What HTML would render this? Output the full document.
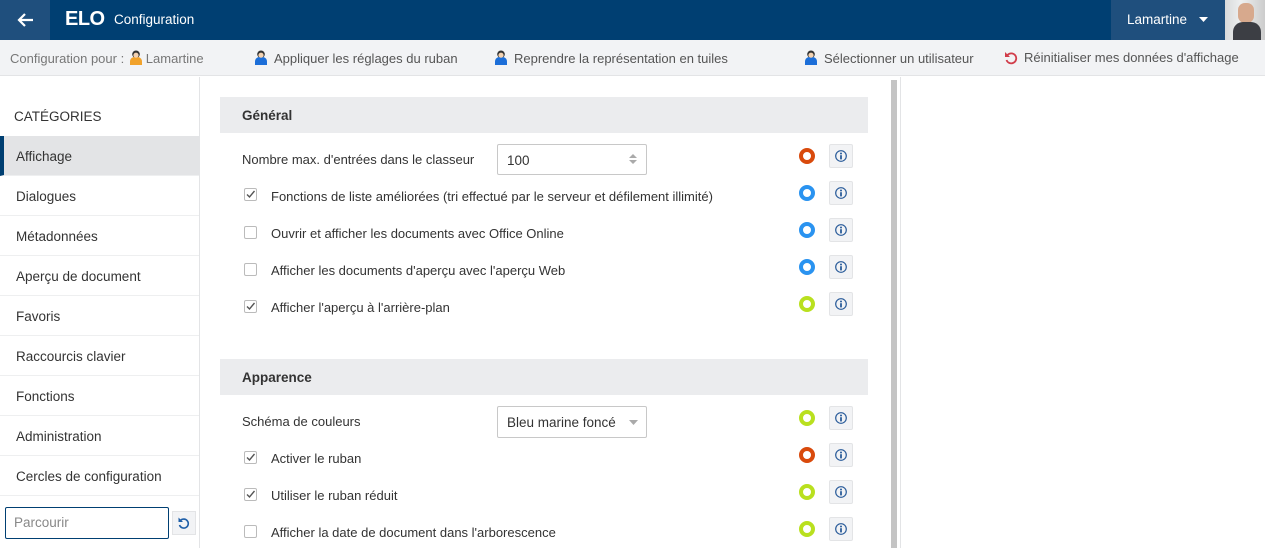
<!DOCTYPE html>
<html><head><meta charset="utf-8"><style>
*{margin:0;padding:0;box-sizing:border-box}
body{width:1265px;height:548px;overflow:hidden;background:#fff;font-family:"Liberation Sans",sans-serif;color:#333;position:relative;font-size:13px}
.a{position:absolute;white-space:nowrap}
.hdr{left:0;top:0;width:1265px;height:40px;background:#003f72}
.tb{left:0;top:40px;width:1265px;height:36px;background:#f2f3f5;border-bottom:1px solid #e3e4e6}
.tbt{top:50px;font-size:13px;color:#555}
.side{left:0;top:77px;width:200px;height:471px;border-right:1px solid #e3e4e6}
.it{left:0;width:199px;height:40px;line-height:42px;padding-left:16px;font-size:13.5px;color:#333;border-bottom:1px solid #eeeff0}
.sec{left:220px;width:648px;height:36px;background:#ebecee;font-weight:bold;font-size:13.5px;line-height:38px;padding-left:22px;color:#333}
.lbl{left:271px;font-size:13px;color:#333}
.cb{left:244px;width:13px;height:13px;border:1px solid #bbb;background:#fff;border-radius:2px}
.ck{left:244px;width:13px;height:13px}
.ci{left:799px;width:16px;height:16px;border-radius:50%;border:4px solid}
.ib{left:829px;width:24px;height:24px;background:#f2f3f5;border:1px solid #e3e4e6;border-radius:2px}
.usr{display:inline-block;width:12px;height:15px;vertical-align:-2px;margin-right:7px}
</style></head><body>
<div class="a hdr"></div>
<div class="a" style="left:0;top:0;width:50px;height:40px;background:#1f4f7d"></div>
<svg class="a" style="left:16px;top:12px" width="18" height="16" viewBox="0 0 18 16"><path d="M17 8H3M9 2L3 8l6 6" stroke="#fff" stroke-width="2.2" fill="none"/></svg>
<div class="a" style="left:65px;top:8px;color:#fff;font-weight:bold;font-size:20px;letter-spacing:-0.5px">ELO</div>
<div class="a" style="left:114px;top:12px;color:#fff;font-size:13.5px">Configuration</div>
<div class="a" style="left:1111px;top:0;width:114px;height:40px;background:#1f4f7d"></div>
<div class="a" style="left:1127px;top:12px;color:#fff;font-size:13.5px">Lamartine</div>
<svg class="a" style="left:1199px;top:17px" width="9" height="6"><path d="M0 0h9L4.5 5z" fill="#fff"/></svg>
<div class="a" style="left:1225px;top:0;width:40px;height:40px;background:linear-gradient(90deg,#d8dadb,#eef0f0 40%,#ccc)"></div>
<div class="a" style="left:1238px;top:3px;width:16px;height:20px;border-radius:7px;background:#d7a98d"></div>
<div class="a" style="left:1233px;top:22px;width:28px;height:18px;border-radius:10px 10px 0 0;background:#3c3e44"></div>

<div class="a tb"></div>
<svg width="0" height="0" style="position:absolute"><defs>
<g id="u"><circle cx="6" cy="4.3" r="3.8" fill="#333"/><path d="M0 15v-3.3c0-3.2 2.2-4.8 6-4.8s6 1.6 6 4.8V15z" fill="currentColor"/><circle cx="6" cy="5.2" r="2.6" fill="#f3d2b2"/></g></defs></svg>
<div class="a tbt" style="left:10px;color:#777">Configuration pour : <svg class="usr" style="color:#f1a22b;margin-right:4px;margin-left:2px"><use href="#u"/></svg>Lamartine</div>
<div class="a tbt" style="left:255px"><svg class="usr" style="color:#1c6ed8"><use href="#u"/></svg>Appliquer les réglages du ruban</div>
<div class="a tbt" style="left:495px"><svg class="usr" style="color:#1c6ed8"><use href="#u"/></svg>Reprendre la représentation en tuiles</div>
<div class="a tbt" style="left:805px"><svg class="usr" style="color:#1c6ed8"><use href="#u"/></svg>Sélectionner un utilisateur</div>
<svg class="a" style="left:1004px;top:50px" width="14" height="15" viewBox="0 0 14 15"><path d="M3.5 5A5 5 0 1 1 2.5 10" stroke="#d13d4a" stroke-width="1.8" fill="none"/><path d="M1 2v5h5z" fill="#d13d4a"/></svg>
<div class="a tbt" style="left:1024px">Réinitialiser mes données d'affichage</div>

<div class="a side"></div>
<div class="a" style="left:14px;top:109px;font-size:13.5px;color:#333">CATÉGORIES</div>
<div class="a it" style="top:136px;background:#e3e4e6;border-left:4px solid #003f72;padding-left:12px">Affichage</div>
<div class="a it" style="top:176px">Dialogues</div>
<div class="a it" style="top:216px">Métadonnées</div>
<div class="a it" style="top:256px">Aperçu de document</div>
<div class="a it" style="top:296px">Favoris</div>
<div class="a it" style="top:336px">Raccourcis clavier</div>
<div class="a it" style="top:376px">Fonctions</div>
<div class="a it" style="top:416px">Administration</div>
<div class="a it" style="top:456px">Cercles de configuration</div>
<div class="a" style="left:5px;top:507px;width:164px;height:32px;border:1px solid #003f72;border-radius:2px;padding:7px 8px;color:#888;font-size:13.5px">Parcourir</div>
<div class="a" style="left:172px;top:511px;width:24px;height:24px;background:#f2f3f5;border:1px solid #e3e4e6"></div>
<svg class="a" style="left:177px;top:516px" width="14" height="14" viewBox="0 0 14 14"><path d="M3.5 4.5A4.5 4.5 0 1 1 2.5 9" stroke="#1f5fa8" stroke-width="1.6" fill="none"/><path d="M1.5 1.5v4.5h4.5z" fill="#1f5fa8"/></svg>

<div class="a" style="left:891px;top:80px;width:6px;height:468px;background:#c4c4c4"></div>
<div class="a" style="left:900px;top:77px;width:1px;height:471px;background:#e3e4e6"></div>

<div class="a sec" style="top:97px">Général</div>
<div class="a" style="left:242px;top:152px">Nombre max. d'entrées dans le classeur</div>
<div class="a" style="left:497px;top:144px;width:150px;height:31px;border:1px solid #c8c8c8;border-radius:2px;padding:8px 9px;font-size:13.5px">100</div>
<svg class="a" style="left:629px;top:153px" width="8" height="12"><path d="M0 5l4-4 4 4zM0 7l4 4 4-4z" fill="#aaa"/></svg>

<svg class="a ck" style="top:188px" viewBox="0 0 13 13"><rect x=".5" y=".5" width="12" height="12" rx="1.5" fill="#fff" stroke="#bbb"/><path d="M3 6.5l2.5 2.5L10.5 3" stroke="#555" stroke-width="1.4" fill="none"/></svg>
<div class="a lbl" style="top:189px">Fonctions de liste améliorées (tri effectué par le serveur et défilement illimité)</div>
<div class="a cb" style="top:226px"></div>
<div class="a lbl" style="top:226px">Ouvrir et afficher les documents avec Office Online</div>
<div class="a cb" style="top:263px"></div>
<div class="a lbl" style="top:263px">Afficher les documents d'aperçu avec l'aperçu Web</div>
<svg class="a ck" style="top:300px" viewBox="0 0 13 13"><rect x=".5" y=".5" width="12" height="12" rx="1.5" fill="#fff" stroke="#bbb"/><path d="M3 6.5l2.5 2.5L10.5 3" stroke="#555" stroke-width="1.4" fill="none"/></svg>
<div class="a lbl" style="top:300px">Afficher l'aperçu à l'arrière-plan</div>

<div class="a sec" style="top:359px">Apparence</div>
<div class="a" style="left:242px;top:414px">Schéma de couleurs</div>
<div class="a" style="left:497px;top:406px;width:150px;height:32px;border:1px solid #c8c8c8;border-radius:2px;padding:8px 9px;font-size:13.5px">Bleu marine foncé</div>
<svg class="a" style="left:629px;top:420px" width="9" height="5"><path d="M0 0h9L4.5 5z" fill="#aaa"/></svg>
<svg class="a ck" style="top:451px" viewBox="0 0 13 13"><rect x=".5" y=".5" width="12" height="12" rx="1.5" fill="#fff" stroke="#bbb"/><path d="M3 6.5l2.5 2.5L10.5 3" stroke="#555" stroke-width="1.4" fill="none"/></svg>
<div class="a lbl" style="top:451px">Activer le ruban</div>
<svg class="a ck" style="top:488px" viewBox="0 0 13 13"><rect x=".5" y=".5" width="12" height="12" rx="1.5" fill="#fff" stroke="#bbb"/><path d="M3 6.5l2.5 2.5L10.5 3" stroke="#555" stroke-width="1.4" fill="none"/></svg>
<div class="a lbl" style="top:488px">Utiliser le ruban réduit</div>
<div class="a cb" style="top:525px"></div>
<div class="a lbl" style="top:525px">Afficher la date de document dans l'arborescence</div>

<svg width="0" height="0" style="position:absolute"><defs><g id="i"><circle cx="6" cy="6" r="5.3" fill="none" stroke="#2a5c9a" stroke-width="1.2"/><circle cx="6" cy="3.5" r="1" fill="#2a5c9a"/><rect x="5.1" y="5.2" width="1.8" height="4.2" fill="#2a5c9a"/></g></defs></svg>

<div class="a ci" style="top:148px;border-color:#d94a0c"></div>
<div class="a ci" style="top:185px;border-color:#2a93f0"></div>
<div class="a ci" style="top:222px;border-color:#2a93f0"></div>
<div class="a ci" style="top:259px;border-color:#2a93f0"></div>
<div class="a ci" style="top:296px;border-color:#b9e01f"></div>
<div class="a ci" style="top:410px;border-color:#b9e01f"></div>
<div class="a ci" style="top:447px;border-color:#d94a0c"></div>
<div class="a ci" style="top:484px;border-color:#b9e01f"></div>
<div class="a ci" style="top:521px;border-color:#b9e01f"></div>

<div class="a ib" style="top:144px"><svg style="margin:5px" width="12" height="12"><use href="#i"/></svg></div>
<div class="a ib" style="top:181px"><svg style="margin:5px" width="12" height="12"><use href="#i"/></svg></div>
<div class="a ib" style="top:218px"><svg style="margin:5px" width="12" height="12"><use href="#i"/></svg></div>
<div class="a ib" style="top:255px"><svg style="margin:5px" width="12" height="12"><use href="#i"/></svg></div>
<div class="a ib" style="top:292px"><svg style="margin:5px" width="12" height="12"><use href="#i"/></svg></div>
<div class="a ib" style="top:406px"><svg style="margin:5px" width="12" height="12"><use href="#i"/></svg></div>
<div class="a ib" style="top:443px"><svg style="margin:5px" width="12" height="12"><use href="#i"/></svg></div>
<div class="a ib" style="top:480px"><svg style="margin:5px" width="12" height="12"><use href="#i"/></svg></div>
<div class="a ib" style="top:517px"><svg style="margin:5px" width="12" height="12"><use href="#i"/></svg></div>
</body></html>
